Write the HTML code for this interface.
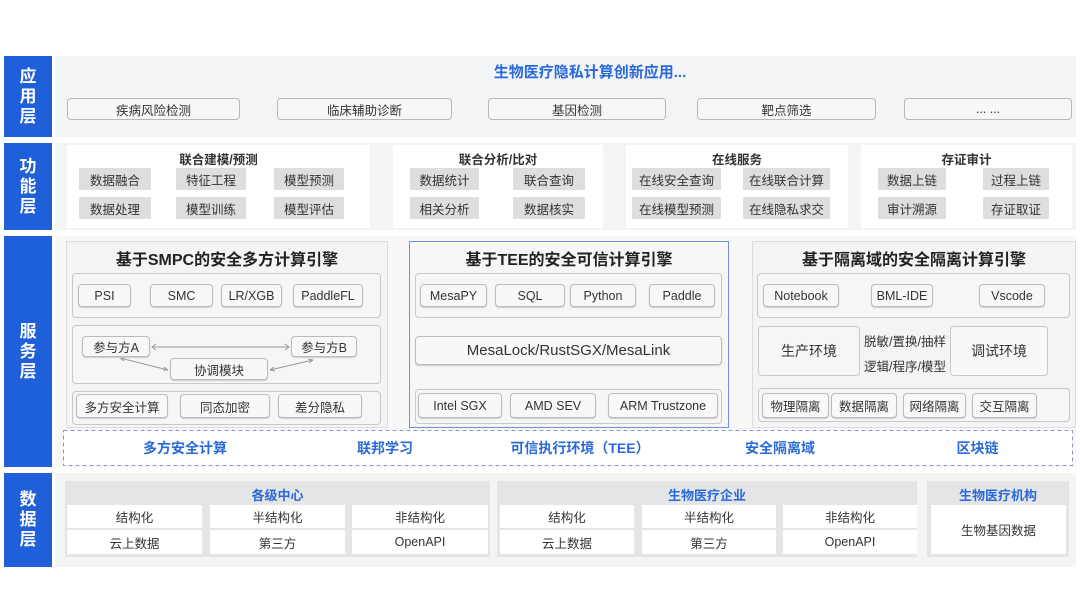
<!DOCTYPE html>
<html><head><meta charset="utf-8"><style>
*{margin:0;padding:0;box-sizing:border-box}
body{width:1080px;height:608px;background:#fff;position:relative;overflow:hidden;font-family:"Liberation Sans","Noto Sans CJK SC",sans-serif;color:#333}
div{position:absolute}
.lb{left:4px;width:48px;background:#1f5fd8;color:#fff;font-weight:bold;font-size:17px;line-height:20px;display:flex;align-items:center;justify-content:center;text-align:center}
.band{left:55px;width:1021px;background:#f3f4f6}
.c{display:flex;align-items:center;justify-content:center;font-size:12.5px;white-space:nowrap}
.ab{border:1px solid #b8b8b8;border-radius:4px;background:#f7f7f7}
.wp{background:#fff}
.g{background:#dedede}
.t{font-weight:bold;font-size:12.5px;color:#333}
.sb{border:1px solid #c8c8c8;border-radius:4px;background:#f6f6f6}
.cb{border:1px solid #bcbcbc;border-radius:4px;background:#f8f8f8;box-shadow:0 1px 1px #ccc}
.h{font-weight:bold;font-size:16px;color:#222}
.bl{color:#2a6ad8;font-weight:bold;font-size:14px}
.dp{background:#e4e5e7}
.wc{background:#fff}
</style></head><body>
<div class="lb" style="top:56px;height:81px">应<br>用<br>层</div>
<div class="lb" style="top:143px;height:87px">功<br>能<br>层</div>
<div class="lb" style="top:236px;height:231px">服<br>务<br>层</div>
<div class="lb" style="top:473px;height:94px">数<br>据<br>层</div>

<div class="band" style="top:56px;height:81px"></div>
<div class="band" style="top:143px;height:87px"></div>
<div class="band" style="top:236px;height:231px;background:#f8f8f9"></div>
<div class="band" style="top:473px;height:94px"></div>

<div class="c bl" style="left:400px;width:380px;top:60px;height:22px;font-size:15px">生物医疗隐私计算创新应用...</div>
<div class="c ab" style="left:67px;width:173px;top:98px;height:22px">疾病风险检测</div>
<div class="c ab" style="left:277px;width:175px;top:98px;height:22px">临床辅助诊断</div>
<div class="c ab" style="left:488px;width:178px;top:98px;height:22px">基因检测</div>
<div class="c ab" style="left:697px;width:179px;top:98px;height:22px">靶点筛选</div>
<div class="c ab" style="left:904px;width:168px;top:98px;height:22px">... ...</div>

<div class="wp" style="left:67px;width:303px;top:145px;height:83px"></div>
<div class="wp" style="left:393px;width:210px;top:145px;height:83px"></div>
<div class="wp" style="left:626px;width:222px;top:145px;height:83px"></div>
<div class="wp" style="left:861px;width:211px;top:145px;height:83px"></div>
<div class="c t" style="left:67px;width:303px;top:150px;height:16px">联合建模/预测</div>
<div class="c t" style="left:393px;width:210px;top:150px;height:16px">联合分析/比对</div>
<div class="c t" style="left:626px;width:222px;top:150px;height:16px">在线服务</div>
<div class="c t" style="left:861px;width:211px;top:150px;height:16px">存证审计</div>
<div class="c g" style="left:79px;width:72px;top:168px;height:22px">数据融合</div>
<div class="c g" style="left:176px;width:70px;top:168px;height:22px">特征工程</div>
<div class="c g" style="left:274px;width:70px;top:168px;height:22px">模型预测</div>
<div class="c g" style="left:79px;width:72px;top:197px;height:22px">数据处理</div>
<div class="c g" style="left:176px;width:70px;top:197px;height:22px">模型训练</div>
<div class="c g" style="left:274px;width:70px;top:197px;height:22px">模型评估</div>
<div class="c g" style="left:410px;width:69px;top:168px;height:22px">数据统计</div>
<div class="c g" style="left:513px;width:72px;top:168px;height:22px">联合查询</div>
<div class="c g" style="left:410px;width:69px;top:197px;height:22px">相关分析</div>
<div class="c g" style="left:513px;width:72px;top:197px;height:22px">数据核实</div>
<div class="c g" style="left:632px;width:89px;top:168px;height:22px">在线安全查询</div>
<div class="c g" style="left:743px;width:87px;top:168px;height:22px">在线联合计算</div>
<div class="c g" style="left:632px;width:89px;top:197px;height:22px">在线模型预测</div>
<div class="c g" style="left:743px;width:87px;top:197px;height:22px">在线隐私求交</div>
<div class="c g" style="left:878px;width:68px;top:168px;height:22px">数据上链</div>
<div class="c g" style="left:983px;width:66px;top:168px;height:22px">过程上链</div>
<div class="c g" style="left:878px;width:68px;top:197px;height:22px">审计溯源</div>
<div class="c g" style="left:983px;width:66px;top:197px;height:22px">存证取证</div>

<!-- service panel 1 -->
<div style="left:66px;width:322px;top:241px;height:187px;border:1px solid #ddd;background:#f4f4f4"></div>
<div class="c h" style="left:66px;width:322px;top:247px;height:22px">基于SMPC的安全多方计算引擎</div>
<div class="sb" style="left:72px;width:309px;top:273px;height:45px"></div>
<div class="c cb" style="left:78px;width:53px;top:284px;height:23px">PSI</div>
<div class="c cb" style="left:150px;width:63px;top:284px;height:23px">SMC</div>
<div class="c cb" style="left:221px;width:61px;top:284px;height:23px">LR/XGB</div>
<div class="c cb" style="left:293px;width:70px;top:284px;height:23px">PaddleFL</div>
<div class="sb" style="left:72px;width:309px;top:325px;height:59px"></div>
<svg style="position:absolute;left:0;top:0" width="1080" height="608"><g stroke="#999" fill="none" stroke-width="1">
<path d="M152 347H289M156 344l-4 3 4 3M285 344l4 3-4 3"/>
<path d="M120 358L168 370M120 358l5 0M120 358l4 3M168 370l-5 0M168 370l-4-3"/>
<path d="M270 370L313 360M270 370l4 -3M270 370l5 1M313 360l-4 3M313 360l-5-1"/>
<path d="M568 336V318M565 322l3-4 3 4M568 390V366M565 370l3-4 3 4"/>
<path d="M852 350H948M856 347l-4 3 4 3M944 347l4 3-4 3"/>
</g><rect x="63.5" y="430.5" width="1009" height="35" fill="#fff" stroke="#8a9ab8" stroke-dasharray="4 3"/></svg>
<div class="c cb" style="left:82px;width:68px;top:336px;height:21px">参与方A</div>
<div class="c cb" style="left:291px;width:66px;top:336px;height:21px">参与方B</div>
<div class="c cb" style="left:170px;width:98px;top:358px;height:22px">协调模块</div>
<div class="sb" style="left:72px;width:309px;top:391px;height:34px"></div>
<div class="c cb" style="left:76px;width:92px;top:394px;height:24px">多方安全计算</div>
<div class="c cb" style="left:180px;width:90px;top:394px;height:24px">同态加密</div>
<div class="c cb" style="left:278px;width:84px;top:394px;height:24px">差分隐私</div>

<!-- panel 2 -->
<div style="left:409px;width:320px;top:241px;height:187px;border:1px solid #6d90d8;background:#f6f6f6"></div>
<div class="c h" style="left:409px;width:320px;top:247px;height:22px">基于TEE的安全可信计算引擎</div>
<div class="sb" style="left:415px;width:307px;top:273px;height:45px"></div>
<div class="c cb" style="left:420px;width:67px;top:284px;height:23px">MesaPY</div>
<div class="c cb" style="left:495px;width:70px;top:284px;height:23px">SQL</div>
<div class="c cb" style="left:570px;width:66px;top:284px;height:23px">Python</div>
<div class="c cb" style="left:649px;width:66px;top:284px;height:23px">Paddle</div>
<div class="c cb" style="left:415px;width:307px;top:336px;height:29px;font-size:15px">MesaLock/RustSGX/MesaLink</div>
<div class="sb" style="left:415px;width:307px;top:389px;height:35px"></div>
<div class="c cb" style="left:418px;width:84px;top:393px;height:25px">Intel SGX</div>
<div class="c cb" style="left:510px;width:86px;top:393px;height:25px">AMD SEV</div>
<div class="c cb" style="left:608px;width:110px;top:393px;height:25px">ARM Trustzone</div>

<!-- panel 3 -->
<div style="left:752px;width:324px;top:241px;height:187px;border:1px solid #ddd;background:#f4f4f4"></div>
<div class="c h" style="left:752px;width:324px;top:247px;height:22px">基于隔离域的安全隔离计算引擎</div>
<div class="sb" style="left:757px;width:313px;top:273px;height:45px"></div>
<div class="c cb" style="left:763px;width:76px;top:284px;height:23px">Notebook</div>
<div class="c cb" style="left:871px;width:62px;top:284px;height:23px">BML-IDE</div>
<div class="c cb" style="left:979px;width:66px;top:284px;height:23px">Vscode</div>
<div class="c sb" style="left:758px;width:102px;top:326px;height:50px;font-size:14px">生产环境</div>
<div class="c sb" style="left:950px;width:98px;top:326px;height:50px;font-size:14px;background:#f8f8f8">调试环境</div>
<div class="c" style="left:860px;width:90px;top:331px;height:18px">脱敏/置换/抽样</div>
<div class="c" style="left:860px;width:90px;top:356px;height:18px">逻辑/程序/模型</div>
<div class="sb" style="left:758px;width:312px;top:388px;height:34px"></div>
<div class="c cb" style="left:762px;width:67px;top:393px;height:25px">物理隔离</div>
<div class="c cb" style="left:831px;width:66px;top:393px;height:25px">数据隔离</div>
<div class="c cb" style="left:903px;width:63px;top:393px;height:25px">网络隔离</div>
<div class="c cb" style="left:972px;width:65px;top:393px;height:25px">交互隔离</div>

<div class="c bl" style="left:125px;width:120px;top:438px;height:20px">多方安全计算</div>
<div class="c bl" style="left:330px;width:110px;top:438px;height:20px">联邦学习</div>
<div class="c bl" style="left:500px;width:160px;top:438px;height:20px">可信执行环境（TEE）</div>
<div class="c bl" style="left:720px;width:120px;top:438px;height:20px">安全隔离域</div>
<div class="c bl" style="left:930px;width:95px;top:438px;height:20px">区块链</div>

<!-- data -->
<div class="dp" style="left:65px;width:425px;top:481px;height:76px"></div>
<div class="dp" style="left:497px;width:420px;top:481px;height:76px"></div>
<div class="dp" style="left:927px;width:142px;top:481px;height:76px"></div>
<div class="c bl" style="left:65px;width:425px;top:485px;height:18px;font-size:13px">各级中心</div>
<div class="c bl" style="left:497px;width:420px;top:485px;height:18px;font-size:13px">生物医疗企业</div>
<div class="c bl" style="left:927px;width:142px;top:485px;height:18px;font-size:13px">生物医疗机构</div>
<div class="c wc" style="left:67px;width:135px;top:505px;height:23px">结构化</div>
<div class="c wc" style="left:210px;width:135px;top:505px;height:23px">半结构化</div>
<div class="c wc" style="left:352px;width:136px;top:505px;height:23px">非结构化</div>
<div class="c wc" style="left:67px;width:135px;top:530px;height:24px">云上数据</div>
<div class="c wc" style="left:210px;width:135px;top:530px;height:24px">第三方</div>
<div class="c wc" style="left:352px;width:136px;top:530px;height:24px">OpenAPI</div>
<div class="c wc" style="left:500px;width:134px;top:505px;height:23px">结构化</div>
<div class="c wc" style="left:642px;width:134px;top:505px;height:23px">半结构化</div>
<div class="c wc" style="left:783px;width:134px;top:505px;height:23px">非结构化</div>
<div class="c wc" style="left:500px;width:134px;top:530px;height:24px">云上数据</div>
<div class="c wc" style="left:642px;width:134px;top:530px;height:24px">第三方</div>
<div class="c wc" style="left:783px;width:134px;top:530px;height:24px">OpenAPI</div>
<div class="c wc" style="left:931px;width:135px;top:505px;height:49px">生物基因数据</div>
</body></html>
